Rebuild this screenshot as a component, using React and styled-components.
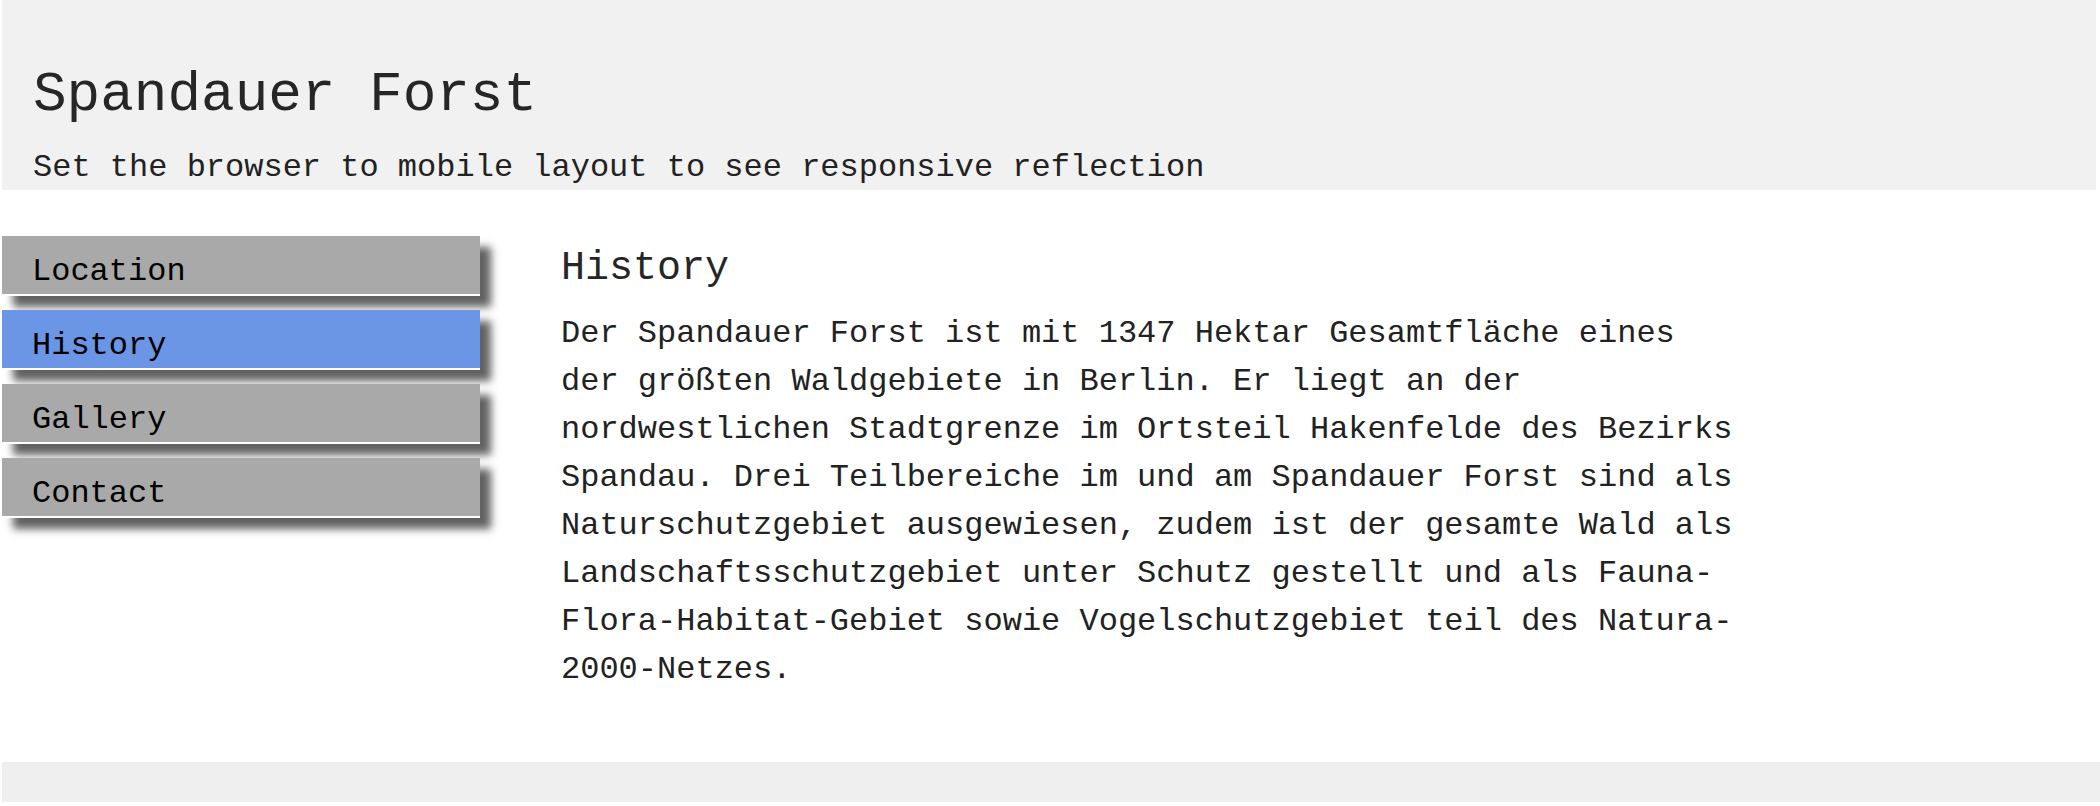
import React from 'react'
import styled, { createGlobalStyle } from 'styled-components'

const GlobalStyle = createGlobalStyle`
    html, body {
        margin: 0;
        padding: 0;
        background: #FFFFFF;
    }
    body {
        font-family: "Courier New", "Liberation Mono", monospace;
        color: #222222;
    }
`;

const PageStyled = styled.div`
    padding-left: 2px;
    display: flex;
    flex-direction: column;
`;

const HeaderStyled = styled.header`
    background: #F1F1F1;
    height: 190px;
    box-sizing: border-box;
    margin-right: 4px;
    padding: 63px 0 0 31px;
    .title {
        margin: 0;
        font-size: 56px;
        line-height: 64px;
        font-weight: normal;
        color: #262626;
    }
    .subtitle {
        margin: 21px 0 0;
        font-size: 32px;
        line-height: 40px;
        color: #222222;
    }
`;

const MainStyled = styled.main`
    display: flex;
    align-items: flex-start;
    padding: 46px 0 68px;
    gap: 81px;
`;

const NavStyled = styled.nav`
    width: 478px;
    flex-shrink: 0;
    display: flex;
    flex-direction: column;
    gap: 14px;
`;

const NavItem = styled.div`
    box-sizing: content-box;
    height: 44px;
    padding: 14px 0 0 30px;
    font-size: 32px;
    line-height: 44px;
    color: #000000;
    background: ${({ $active }) => ($active ? '#6B95E5' : '#A9A9A9')};
    border-bottom: 2px solid #FFFFFF;
    box-shadow: 11px 11px 8px rgba(0, 0, 0, 0.62);
`;

const ContentStyled = styled.section`
    width: 1180px;
    padding-top: 9px;
    h2 {
        margin: 0;
        font-size: 40px;
        line-height: 48px;
        font-weight: normal;
        color: #262626;
    }
    p {
        margin: 17px 0 0;
        font-size: 32px;
        line-height: 48px;
        color: #222222;
    }
`;

const FooterStyled = styled.footer`
    background: #EFEFEF;
    height: 40px;
    margin-bottom: 4px;
`;

const links = ['Location', 'History', 'Gallery', 'Contact'];

const App = () => {
    return (
        <PageStyled>
            <GlobalStyle />
            <HeaderStyled>
                <h1 className="title">Spandauer Forst</h1>
                <p className="subtitle">Set the browser to mobile layout to see responsive reflection</p>
            </HeaderStyled>
            <MainStyled>
                <NavStyled>
                    {links.map((link) => (
                        <NavItem key={link} $active={link === 'History'}>{link}</NavItem>
                    ))}
                </NavStyled>
                <ContentStyled>
                    <h2>History</h2>
                    <p>
                        Der Spandauer Forst ist mit 1347 Hektar Gesamtfläche eines der größten Waldgebiete in Berlin. Er liegt an der nordwestlichen Stadtgrenze im Ortsteil Hakenfelde des Bezirks Spandau. Drei Teilbereiche im und am Spandauer Forst sind als Naturschutzgebiet ausgewiesen, zudem ist der gesamte Wald als Landschaftsschutzgebiet unter Schutz gestellt und als Fauna-Flora-Habitat-Gebiet sowie Vogelschutzgebiet teil des Natura-2000-Netzes.
                    </p>
                </ContentStyled>
            </MainStyled>
            <FooterStyled />
        </PageStyled>
    )
}

export default App
